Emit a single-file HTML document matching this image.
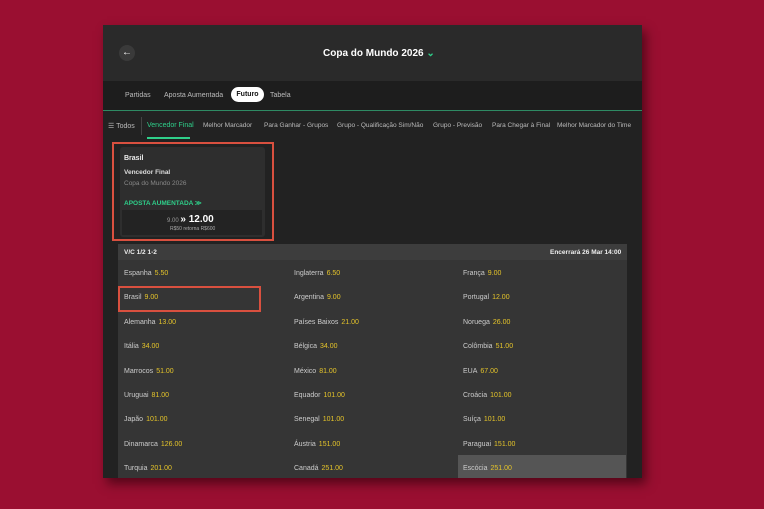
<!DOCTYPE html><html><head><style>
body{margin:0;width:764px;height:509px;background:#9a0f31;font-family:"Liberation Sans",sans-serif;position:relative;overflow:hidden}
.p{position:absolute;left:103px;top:25px;width:539px;height:453px;background:#222;box-shadow:4px 6px 10px rgba(40,0,10,.6);overflow:hidden}
.a{position:absolute;white-space:nowrap}
.hd{left:0;top:0;width:539px;height:56px;background:#2a2a2a}
.tb{left:0;top:56px;width:539px;height:29px;background:#1d1d1d;border-bottom:1px solid #2e8a63}
.t{font-size:7px;color:#bbb}
.o{color:#e5c42a;margin-left:3px}
.row{position:absolute;left:15px;width:509px;height:24px;background:#353535}
.c{position:absolute;font-size:7px;color:#ccc;white-space:nowrap}
</style></head><body>
<div class="p">
<div class="a hd"></div>
<div class="a" style="left:16px;top:20px;width:16px;height:16px;border-radius:50%;background:#3a3a3a;color:#fff;font-size:10px;text-align:center;line-height:16px">←</div>
<div class="a" style="left:220px;top:23px;font-size:10px;font-weight:bold;color:#fff">Copa do Mundo 2026 <span style="color:#2fcf8a">⌄</span></div>
<div class="a tb"></div>
<div class="a t" style="left:22px;top:67px">Partidas</div>
<div class="a t" style="left:61px;top:67px">Aposta Aumentada</div>
<div class="a" style="left:128px;top:62px;width:33px;height:15px;border-radius:8px;background:#fff;color:#111;font-size:7px;font-weight:bold;text-align:center;line-height:15px">Futuro</div>
<div class="a t" style="left:167px;top:67px">Tabela</div>
<div class="a t" style="left:5px;top:97px">☰ Todos</div>
<div class="a" style="left:38px;top:92px;width:1px;height:18px;background:#444"></div>
<div class="a" style="left:44px;top:97px;font-size:7px;color:#2fcf8a">Vencedor Final</div>
<div class="a" style="left:44px;top:112px;width:43px;height:2px;background:#2fcf8a"></div>
<div class="a t" style="left:100px;top:97px;font-size:6.5px">Melhor Marcador</div>
<div class="a t" style="left:161px;top:97px;font-size:6.5px">Para Ganhar - Grupos</div>
<div class="a t" style="left:234px;top:97px;font-size:6.5px">Grupo - Qualificação Sim/Não</div>
<div class="a t" style="left:330px;top:97px;font-size:6.5px">Grupo - Previsão</div>
<div class="a t" style="left:389px;top:97px;font-size:6.5px">Para Chegar à Final</div>
<div class="a t" style="left:454px;top:97px;font-size:6.5px">Melhor Marcador do Time</div>
<div class="a" style="left:9px;top:117px;width:158px;height:95px;border:2px solid #d9503f"></div>
<div class="a" style="left:17px;top:122px;width:145px;height:90px;background:#2e2e2e;border-radius:3px"></div>
<div class="a" style="left:21px;top:130px;font-size:7px;font-weight:bold;color:#eee">Brasil</div>
<div class="a" style="left:21px;top:144px;font-size:6.5px;font-weight:bold;color:#ddd">Vencedor Final</div>
<div class="a" style="left:21px;top:155px;font-size:6.5px;color:#888">Copa do Mundo 2026</div>
<div class="a" style="left:21px;top:174px;font-size:6.5px;font-weight:bold;color:#2fcf8a">APOSTA AUMENTADA ≫</div>
<div class="a" style="left:19px;top:185px;width:140px;height:25px;background:#232323"></div>
<div class="a" style="left:64px;top:189px;font-size:6px;color:#999">9.00 <b style="color:#fff;font-size:10px">» 12.00</b></div>
<div class="a" style="left:67px;top:201px;font-size:5px;color:#aaa">R$50 retorna R$600</div>
<div class="row" style="top:219px;height:16px;background:#3d3d3d"></div>
<div class="a" style="left:21px;top:224px;font-size:6.5px;font-weight:bold;color:#eee">V/C 1/2 1-2</div>
<div class="a" style="left:447px;top:224px;font-size:6.5px;font-weight:bold;color:#eee">Encerrará 26 Mar 14:00</div>
<div class="row" style="top:235px;height:218px"></div>
<div class="a" style="left:355px;top:430px;width:168px;height:24px;background:#555"></div>
<div class="a" style="left:15px;top:261px;width:139px;height:22px;border:2px solid #d9503f"></div>
<div style="position:absolute;left:0;top:237px">
<div class="c" style="left:21px;top:8px">Espanha<span class="o">5.50</span></div><div class="c" style="left:191px;top:8px">Inglaterra<span class="o">6.50</span></div><div class="c" style="left:360px;top:8px">França<span class="o">9.00</span></div>
<div class="c" style="left:21px;top:32px">Brasil<span class="o">9.00</span></div><div class="c" style="left:191px;top:32px">Argentina<span class="o">9.00</span></div><div class="c" style="left:360px;top:32px">Portugal<span class="o">12.00</span></div>
<div class="c" style="left:21px;top:57px">Alemanha<span class="o">13.00</span></div><div class="c" style="left:191px;top:57px">Países Baixos<span class="o">21.00</span></div><div class="c" style="left:360px;top:57px">Noruega<span class="o">26.00</span></div>
<div class="c" style="left:21px;top:81px">Itália<span class="o">34.00</span></div><div class="c" style="left:191px;top:81px">Bélgica<span class="o">34.00</span></div><div class="c" style="left:360px;top:81px">Colômbia<span class="o">51.00</span></div>
<div class="c" style="left:21px;top:106px">Marrocos<span class="o">51.00</span></div><div class="c" style="left:191px;top:106px">México<span class="o">81.00</span></div><div class="c" style="left:360px;top:106px">EUA<span class="o">67.00</span></div>
<div class="c" style="left:21px;top:130px">Uruguai<span class="o">81.00</span></div><div class="c" style="left:191px;top:130px">Equador<span class="o">101.00</span></div><div class="c" style="left:360px;top:130px">Croácia<span class="o">101.00</span></div>
<div class="c" style="left:21px;top:154px">Japão<span class="o">101.00</span></div><div class="c" style="left:191px;top:154px">Senegal<span class="o">101.00</span></div><div class="c" style="left:360px;top:154px">Suíça<span class="o">101.00</span></div>
<div class="c" style="left:21px;top:179px">Dinamarca<span class="o">126.00</span></div><div class="c" style="left:191px;top:179px">Áustria<span class="o">151.00</span></div><div class="c" style="left:360px;top:179px">Paraguai<span class="o">151.00</span></div>
<div class="c" style="left:21px;top:203px">Turquia<span class="o">201.00</span></div><div class="c" style="left:191px;top:203px">Canadá<span class="o">251.00</span></div><div class="c" style="left:360px;top:203px">Escócia<span class="o">251.00</span></div>
</div>
</div>
</body></html>
